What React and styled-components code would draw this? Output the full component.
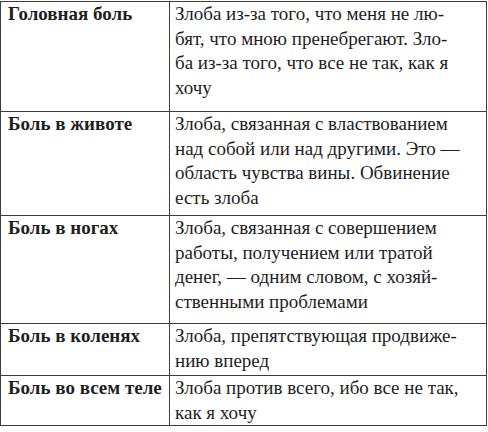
import React from "react";
import styled, { createGlobalStyle } from "styled-components";

const GlobalStyle = createGlobalStyle`
  html, body {
    margin: 0;
    padding: 0;
    background: #ffffff;
  }
`;

const Page = styled.div`
  width: 488px;
  height: 432px;
  padding-top: 1px;
  box-sizing: border-box;
  background: #fff;
  overflow: hidden;
`;

const Table = styled.table`
  width: 487px;
  border-collapse: collapse;
  table-layout: fixed;
  font-family: "Liberation Serif", "Times New Roman", serif;
  font-size: 19px;
  line-height: 24.5px;
  color: #1e1e1e;
`;

const Col = styled.col`
  width: ${(p) => p.$w};
`;

const Cell = styled.td`
  border: 1px solid #3c3c3c;
  vertical-align: top;
  padding: 0 4px 0 ${(p) => (p.$head ? 7 : 5)}px;
  height: ${(p) => p.$h}px;
  box-sizing: border-box;
  font-weight: ${(p) => (p.$head ? 700 : 400)};
  white-space: nowrap;
`;

const rows = [
  {
    name: "Головная боль",
    h: 110,
    text: ["Злоба из-за того, что меня не лю-", "бят, что мною пренебрегают. Зло-", "ба из-за того, что все не так, как я", "хочу"],
  },
  {
    name: "Боль в животе",
    h: 104,
    text: ["Злоба, связанная с властвованием", "над собой или над другими. Это —", "область чувства вины. Обвинение", "есть злоба"],
  },
  {
    name: "Боль в ногах",
    h: 108,
    text: ["Злоба, связанная с совершением", "работы, получением или тратой", "денег, — одним словом, с хозяй-", "ственными проблемами"],
  },
  {
    name: "Боль в коленях",
    h: 52,
    text: ["Злоба, препятствующая продвиже-", "нию вперед"],
  },
  {
    name: "Боль во всем теле",
    h: 46,
    text: ["Злоба против всего, ибо все не так,", "как я хочу"],
  },
];

export default function App() {
  return (
    <>
      <GlobalStyle />
      <Page>
        <Table>
          <colgroup>
            <Col $w="169px" />
            <Col $w="auto" />
          </colgroup>
          <tbody>
            {rows.map((r) => (
              <tr key={r.name}>
                <Cell $head $h={r.h}>{r.name}</Cell>
                <Cell $h={r.h}>
                  {r.text.map((line, i) => (
                    <React.Fragment key={i}>
                      {line}
                      {i < r.text.length - 1 && <br />}
                    </React.Fragment>
                  ))}
                </Cell>
              </tr>
            ))}
          </tbody>
        </Table>
      </Page>
    </>
  );
}
